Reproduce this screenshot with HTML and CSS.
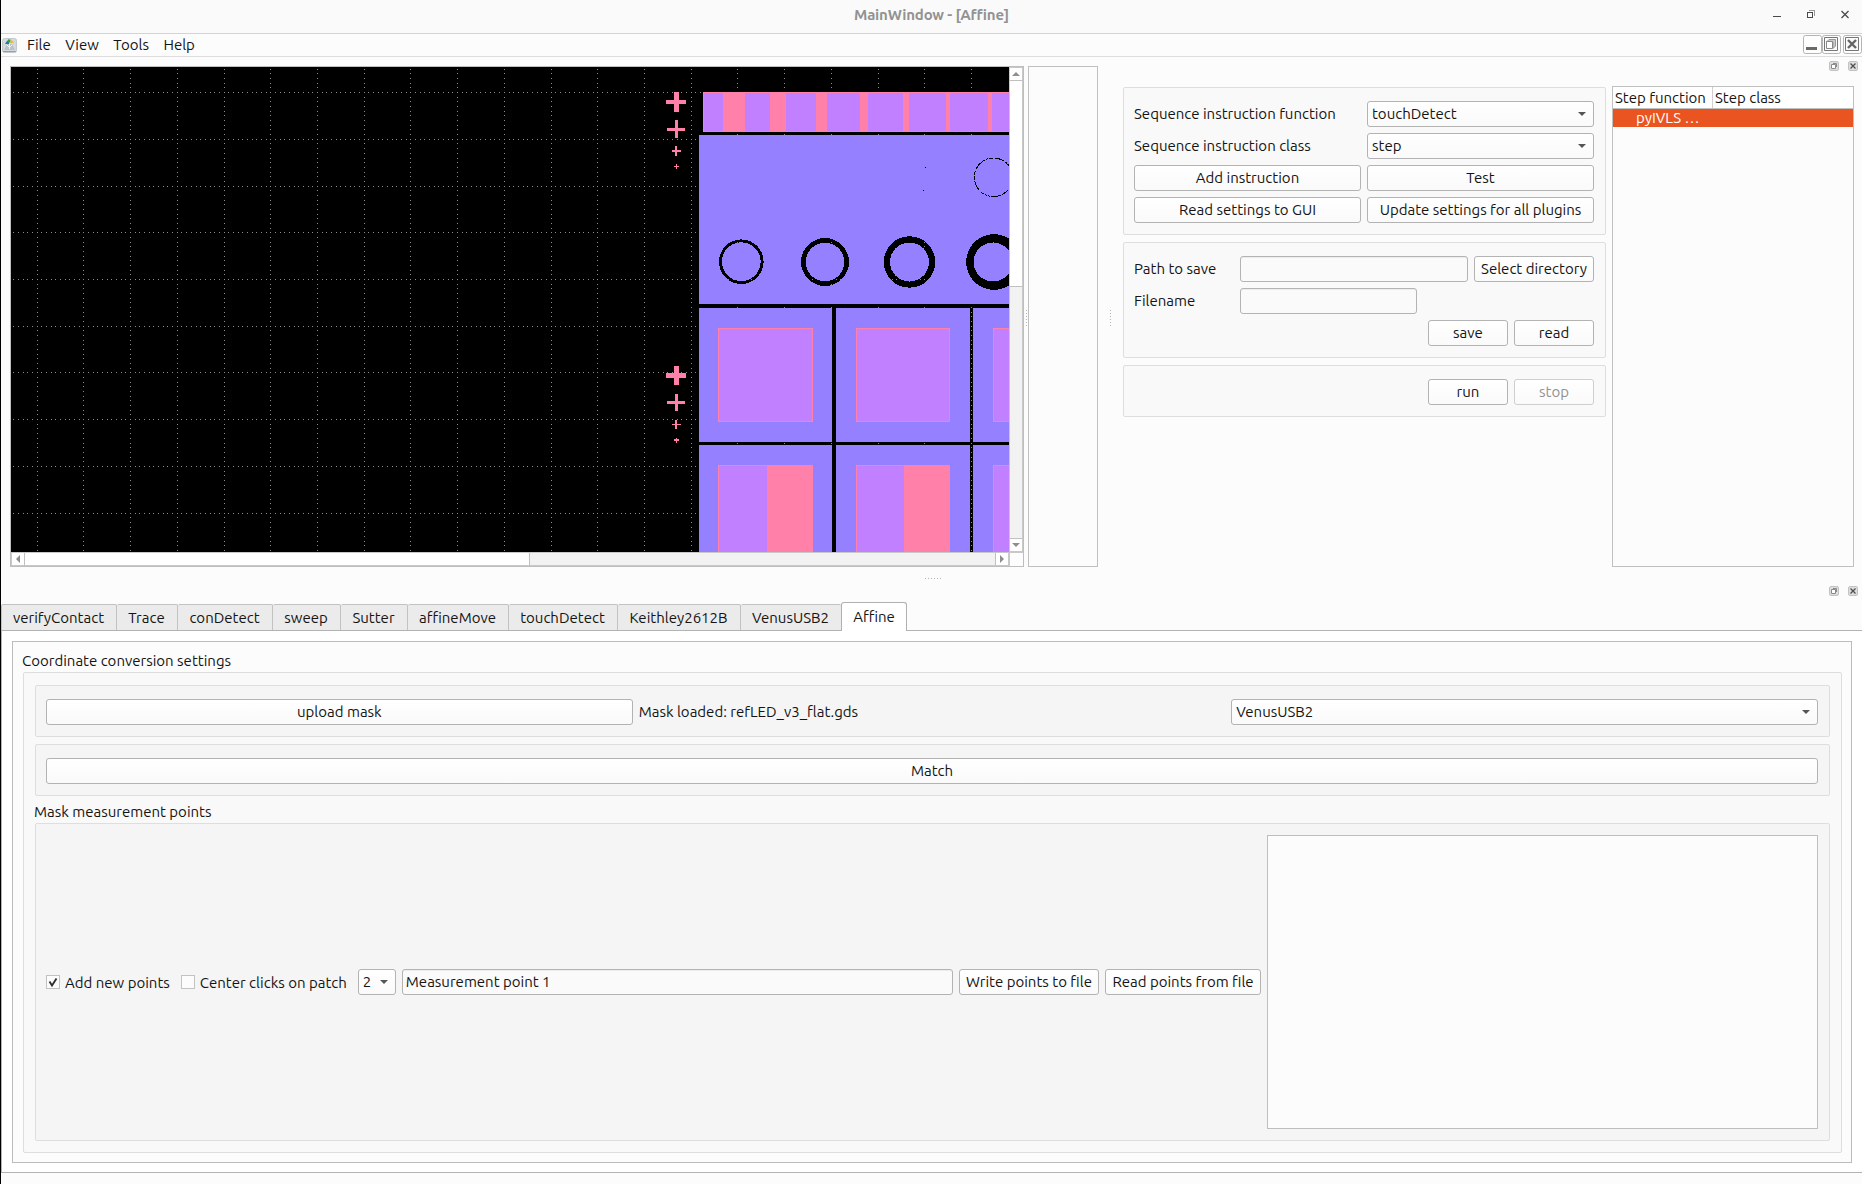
FILE: index.html
```
<!DOCTYPE html>
<html lang="en">
<head>
<meta charset="utf-8">
<title>MainWindow - [Affine]</title>
<link rel="stylesheet" href="styles.css">
</head>
<body>
<div class="window">
  <header class="titlebar">
    <span class="title">MainWindow - [Affine]</span>
    <div class="window-controls">
      <svg width="76" height="9" viewBox="0 0 76 9" shape-rendering="crispEdges">
        <rect x="0" y="6" width="8" height="1" fill="#4a4a4a"/>
        <path d="M34.5 2.5h5v5h-5z" fill="none" stroke="#4a4a4a"/>
        <path d="M36 .5h5.500v5.500" fill="none" stroke="#9a9a9a"/>
        <path d="M68.500 1l7 7M75.500 1l-7 7" stroke="#4a4a4a" stroke-width="1.300" shape-rendering="auto"/>
      </svg>
    </div>
  </header>

  <nav class="menubar">
    <svg class="app-icon" width="15" height="15" viewBox="0 0 15 15">
      <rect x=".5" y=".5" width="14" height="14" rx="2" fill="#d5d9db" stroke="#c3c8ca"/>
      <path d="M3 6Q5 2 7 1.500V6z" fill="#1c78b8"/>
      <path d="M6 4.500V1.500h2.500V4.500z" fill="#35a23c"/>
      <path d="M8.500 1.500Q11 2.500 12 5H8.500z" fill="#e5bf3c"/>
      <path d="M2 12l3-6h5l3 6z" fill="#b9c3c9"/>
      <path d="M5 7l2 2M10 7L8 9M7.500 6v5" stroke="#eef1f2"/>
      <path d="M1 13.500h13" stroke="#97a1a6"/>
    </svg>
    <span>File</span><span>View</span><span>Tools</span><span>Help</span>
    <div class="mdi-controls">
      <svg width="19" height="19" viewBox="0 0 19 19"><rect class="mdi-box" x=".5" y=".5" width="18" height="18" rx="2"/><path d="M3 12h11v3H3z" fill="#6b6b66"/></svg>
      <svg width="19" height="19" viewBox="0 0 19 19"><rect class="mdi-box" x=".5" y=".5" width="18" height="18" rx="2"/><path d="M2.500 2.500h13v13h-13z" fill="#fafafa" stroke="#777"/><path d="M7 4.500h6.500V11L11 13.500V7H4.500z" fill="#c9c9c9" stroke="#999"/><path d="M4.500 6.500h6v7h-6z" fill="#fff" stroke="#888"/></svg>
      <svg class="mdi-close" width="19" height="19" viewBox="0 0 19 19"><rect class="mdi-box" x=".5" y=".5" width="18" height="18" rx="2"/><path d="M2.500 2.500h13v13h-13z" fill="#fafafa" stroke="#777"/><path d="M5 5l8 8M13 5l-8 8" stroke="#666" stroke-width="2.400"/></svg>
    </div>
  </nav>

  <main class="upper">
    <div class="viewer">
      <svg class="mask" width="998" height="485" viewBox="11 67 998 485" shape-rendering="crispEdges">
        <rect x="11" y="67" width="998" height="485" fill="#000"/>
        <g id="grid" class="grid"></g>
        <path fill="#9580ff" fill-rule="evenodd" d="M699 135H1009V304H699z
          M719 261.700a22.300 22.300 0 1 0 44.600 0a22.300 22.300 0 1 0-44.600 0z M721.900 261.700a19.400 19.400 0 1 0 38.800 0a19.400 19.400 0 1 0-38.800 0z
          M801 262a24 24 0 1 0 48 0a24 24 0 1 0-48 0z M805.700 262a19.300 19.300 0 1 0 38.600 0a19.300 19.300 0 1 0-38.600 0z
          M883.800 262a25.700 25.700 0 1 0 51.400 0a25.700 25.700 0 1 0-51.400 0z M890 262a19.500 19.500 0 1 0 39 0a19.500 19.500 0 1 0-39 0z"/>
        <path d="M1009 238.600A27.800 27.800 0 1 0 1009 285.400V273.200A19.500 19.500 0 1 1 1009 250.800z" fill="#000"/>
        <circle cx="993.500" cy="177.300" r="19.300" fill="none" stroke="#000" stroke-dasharray="10 1 2 1 2 1 4 2"/>
        <path d="M925 167h1v1h-1zM923 190h1v1h-1z"/>
        <path class="blue" d="M699 308H832V442H699zM836 308H970V442H836zM973 308H1009V442H973zM699 445H832V552H699zM836 445H970V552H836zM973 445H1009V552H973z"/>
        <path class="pink" d="M703 92H1009V132H703zM718 328H813V422H718zM856 328H950V422H856zM993 328H1009V422H993zM718 465H813V552H718zM856 465H950V552H856zM993 465H1009V552H993z"/>
        <path class="violet" d="M704 93H723V131H704zM745 93H770V131H745zM786 93H816V131H786zM827 93H860V131H827zM868 93H903V131H868zM909 93H946V131H909zM950 93H988V131H950zM992 93H1009V131H992z
          M719 329H812V421H719zM857 329H949V421H857zM994 329H1009V421H994zM719 466H767V552H719zM857 466H904V552H857zM994 466H1009V552H994z"/>
        <path class="pink" d="M666 100H686V104H666zM674 92H679V112H674zM667 128H685V131H667zM675 120H678V138H675zM672 150H681V152H672zM675 146H677V156H675zM674 166H679V167H674zM676 164H677V169H676z
          M666 373H686V378H666zM674 366H679V385H674zM667 401H685V404H667zM675 394H678V411H675zM672 424H681V425H672zM675 420H677V429H675zM674 439H679V441H674zM676 438H677V443H676z"/>
      </svg>
      <div class="scroll vertical">
        <i class="step"><svg width="8" height="4" viewBox="0 0 8 4"><path d="M0 4L4 0l4 4z" fill="#8e8e8e"/></svg></i>
        <i class="handle"></i><i class="trough"></i>
        <i class="step"><svg width="8" height="4" viewBox="0 0 8 4"><path d="M0 0l4 4 4-4z" fill="#8e8e8e"/></svg></i>
      </div>
      <div class="scroll horizontal">
        <i class="step"><svg width="4" height="8" viewBox="0 0 4 8"><path d="M4 0L0 4l4 4z" fill="#8e8e8e"/></svg></i>
        <i class="handle"></i><i class="trough"></i>
        <i class="step"><svg width="4" height="8" viewBox="0 0 4 8"><path d="M0 0l4 4-4 4z" fill="#8e8e8e"/></svg></i>
      </div>
      <div class="corner"></div>
    </div>
    <div class="grip narrow"><i></i><i></i><i></i><i></i><i></i><i></i></div>
    <div class="side-view"></div>
    <div class="grip wide"><i></i><i></i><i></i><i></i><i></i><i></i></div>

    <section class="dock">
      <div class="dock-title">
        <svg width="10" height="10" viewBox="0 0 10 10"><rect class="dock-box" x=".5" y=".5" width="9" height="9" rx="1.500"/><path d="M4 2.500h3.500V6" fill="none" stroke="#8a8a8a"/><path d="M2.500 3.500h4v4h-4z" fill="#fff" stroke="#8a8a8a"/></svg>
        <svg width="10" height="10" viewBox="0 0 10 10"><rect class="dock-box" x=".5" y=".5" width="9" height="9" rx="1.500"/><path d="M2.500 2.500l5 5M7.500 2.500l-5 5" stroke="#505050" stroke-width="1.300"/></svg>
      </div>
      <div class="dock-body">
        <div class="sequence">
          <div class="group instruction">
            <label>Sequence instruction function</label>
            <div class="combo">touchDetect<svg class="caret" width="8" height="4" viewBox="0 0 8 4"><path d="M0 0h8L4 4z"/></svg></div>
            <label>Sequence instruction class</label>
            <div class="combo">step<svg class="caret" width="8" height="4" viewBox="0 0 8 4"><path d="M0 0h8L4 4z"/></svg></div>
            <button>Add instruction</button><button>Test</button>
            <button>Read settings to GUI</button><button>Update settings for all plugins</button>
          </div>
          <div class="group saving">
            <div class="row"><label class="field-label">Path to save</label><div class="input grow"></div><button class="select-dir">Select directory</button></div>
            <div class="row"><label class="field-label">Filename</label><div class="input filename"></div></div>
            <div class="row end"><button class="small">save</button><button class="small">read</button></div>
          </div>
          <div class="group running">
            <div class="row end"><button class="small">run</button><button class="small" disabled>stop</button></div>
          </div>
        </div>
        <div class="tree">
          <div class="tree-head"><span class="first">Step function</span><span>Step class</span></div>
          <div class="tree-row">pyIVLS …</div>
        </div>
      </div>
    </section>
  </main>

  <div class="hgrip"><i></i><i></i><i></i><i></i><i></i><i></i></div>

  <section class="lower">
    <div class="dock-title">
      <svg width="10" height="10" viewBox="0 0 10 10"><rect class="dock-box" x=".5" y=".5" width="9" height="9" rx="1.500"/><path d="M4 2.500h3.500V6" fill="none" stroke="#8a8a8a"/><path d="M2.500 3.500h4v4h-4z" fill="#fff" stroke="#8a8a8a"/></svg>
      <svg width="10" height="10" viewBox="0 0 10 10"><rect class="dock-box" x=".5" y=".5" width="9" height="9" rx="1.500"/><path d="M2.500 2.500l5 5M7.500 2.500l-5 5" stroke="#505050" stroke-width="1.300"/></svg>
    </div>
    <div class="tabs">
      <span class="tab w115">verifyContact</span><span class="tab w61">Trace</span><span class="tab w95">conDetect</span><span class="tab w68">sweep</span><span class="tab w67">Sutter</span><span class="tab w101">affineMove</span><span class="tab w109">touchDetect</span><span class="tab w123">Keithley2612B</span><span class="tab w100">VenusUSB2</span><span class="tab active">Affine</span>
    </div>
    <div class="pane">
      <div class="page">
        <div class="caption">Coordinate conversion settings</div>
        <div class="group outer">
          <div class="group inner thirds">
            <button>upload mask</button>
            <label>Mask loaded: refLED_v3_flat.gds</label>
            <div class="combo">VenusUSB2<svg class="caret" width="8" height="4" viewBox="0 0 8 4"><path d="M0 0h8L4 4z"/></svg></div>
          </div>
          <div class="group inner match"><button>Match</button></div>
          <div class="caption points-caption">Mask measurement points</div>
          <div class="group inner points">
            <span class="check"><svg width="14" height="14" viewBox="0 0 14 14"><rect class="check-box" x=".5" y=".5" width="13" height="13"/><path d="M3.500 6.500l2.500 4L10.500 3.500" fill="none" stroke="#303030" stroke-width="1.900"/></svg>Add new points</span>
            <span class="check second"><svg width="14" height="14" viewBox="0 0 14 14"><rect class="check-box" x=".5" y=".5" width="13" height="13"/></svg>Center clicks on patch</span>
            <div class="combo tiny">2<svg class="caret" width="8" height="4" viewBox="0 0 8 4"><path d="M0 0h8L4 4z"/></svg></div>
            <div class="input grow">Measurement point 1</div>
            <button class="write">Write points to file</button>
            <button class="read">Read points from file</button>
            <div class="list"></div>
          </div>
        </div>
      </div>
    </div>
  </section>
</div>
<script src="grid.js"></script>
</body>
</html>
```
FILE: grid.js
```
// Dotted background grid of the mask viewer: one dot every 4.67px, a line every 46.7px.
const layer = document.getElementById('grid');
let d = '';
for (let k = 0; k < 21; k++) {
  const x = Math.round(36.68 + 46.715 * k);
  for (let n = -5; n < 99; n++) d += `M${x} ${Math.round(92.1 + 4.672 * n)}h1v1h-1z`;
}
for (let k = 0; k < 10; k++) {
  const y = Math.round(92.1 + 46.72 * k);
  for (let n = -5; n < 209; n++) d += `M${Math.round(36.68 + 4.6715 * n)} ${y}h1v1h-1z`;
}
const dots = document.createElementNS('http://www.w3.org/2000/svg', 'path');
dots.setAttribute('d', d);
layer.appendChild(dots);
```
FILE: styles.css
```
* { box-sizing: border-box; }

body {
  margin: 0;
  background: #fcfcfc;
  color: #141414;
  font: 15px/17px Ubuntu, "Noto Sans", sans-serif;
}

svg { display: block; flex: none; }

.window {
  display: flex;
  flex-direction: column;
  height: 1184px;
  border-left: 1px solid #000;
  overflow: hidden;
  white-space: nowrap;
}

/* title bar and menu */
.titlebar {
  display: flex;
  align-items: center;
  justify-content: center;
  flex: none;
  height: 34px;
  padding: 0 13px 4px 89px;
  background: #fafafa;
  border-bottom: 1px solid #d4d4d4;
}
.title { flex: 1; text-align: center; font-weight: bold; letter-spacing: -0.18px; color: #929292; }
.window-controls { display: flex; }
.menubar {
  display: flex;
  align-items: center;
  flex: none;
  gap: 14.500px;
  height: 23px;
  padding-left: 1px;
  border-bottom: 1px solid #dedede;
}
.menubar span { padding-bottom: 2px; }
.app-icon { margin-right: -4.500px; }
.mdi-controls { display: flex; height: 21px; margin-left: auto; }
.mdi-close { margin-left: 2px; }
.mdi-box { fill: #fdfdfd; stroke: #b4b4b4; }

/* upper half */
.upper { display: flex; flex: none; height: 510px; padding-left: 9px; }
.viewer {
  display: grid;
  flex: none;
  grid-template: 485px 14px / 998px 14px;
  height: 501px;
  margin-top: 9px;
  border: 1px solid #bebebe;
}
.grid { fill: #8c8c8c; }
.blue { fill: #9580ff; }
.pink { fill: #ff80a8; }
.violet { fill: #c080ff; }

.scroll { display: flex; border: 1px solid #c8c8c8; background: #f2f2f2; }
.vertical { flex-direction: column; }
.step { display: flex; flex: none; align-items: center; justify-content: center; background: #fff; }
.vertical .step { height: 12px; }
.vertical .handle { height: 207px; border: solid #c0c0c0; border-width: 1px 0; background: #fff; }
.trough { flex: 1; }
.vertical .trough { border-bottom: 1px solid #c0c0c0; }
.horizontal .step { width: 12px; }
.horizontal .handle { width: 506px; border: solid #c0c0c0; border-width: 0 1px; background: #fff; }
.horizontal .trough { border-right: 1px solid #c0c0c0; }
.corner { border: solid #c8c8c8; border-width: 1px 0 0 1px; background: #fdfdfd; }

.grip { display: flex; flex: none; flex-direction: column; gap: 2px; padding-top: 253px; }
.grip i, .hgrip i { width: 1px; height: 1px; background: #b4b4b4; }
.narrow { width: 4px; padding-left: 2px; }
.wide { width: 14px; padding-left: 12px; }
.side-view { flex: none; width: 70px; height: 501px; margin-top: 9px; border: 1px solid #c0c0c0; }

.dock { display: flex; flex: 1; flex-direction: column; }
.dock-title { display: flex; flex: none; justify-content: flex-end; gap: 9px; height: 29px; padding: 4px 4px 0 0; }
.dock-box { fill: #dedede; stroke: #c2c2c2; }
.dock-body { display: flex; flex: 1; gap: 6px; padding-left: 11px; }
.sequence { display: flex; flex: none; flex-direction: column; gap: 7px; width: 483px; padding-top: 1px; }

.group { border: 1px solid #dedede; border-radius: 2px; background: #f9f9f9; }
.instruction {
  display: grid;
  grid-template-columns: 227px 227px;
  gap: 6px;
  height: 148px;
  padding: 13px 0 0 10px;
  grid-auto-rows: 26px;
  align-items: center;
}
.saving { display: flex; flex-direction: column; gap: 6px; height: 116px; padding: 13px 11px 0 10px; }
.running { height: 52px; padding: 13px 11px 0 10px; }
.row { display: flex; align-items: center; gap: 6px; }
.end { justify-content: flex-end; }
label { padding-bottom: 1px; }
.field-label { width: 100px; }
.grow { flex: 1; }
.filename { width: 177px; }
.small { width: 80px; }
.select-dir { width: 120px; }

button, .combo, .input {
  height: 26px;
  padding: 0;
  border: 1px solid #b3b3b3;
  border-radius: 3px;
  background: linear-gradient(#fff, #fafafa);
  color: #141414;
  font: inherit;
  line-height: 24px;
}
button:disabled { border-color: #cfcfcf; color: #929292; }
.combo { display: flex; align-items: center; justify-content: space-between; padding: 0 7px 0 4px; }
.caret { fill: #555; }
.input { padding-left: 3px; background: #fafafa; box-shadow: inset 0 1px #ececec; }

.tree { flex: none; width: 242px; height: 481px; border: 1px solid #c0c0c0; }
.tree-head { display: flex; height: 22px; border-bottom: 1px solid #c0c0c0; background: #fff; line-height: 22px; }
.tree-head span { padding-left: 2px; }
.tree-head .first { width: 100px; border-right: 1px solid #d0d0d0; }
.tree-row { height: 18px; padding-left: 23px; background: #e95420; color: #fff; line-height: 18px; }

.hgrip { display: flex; flex: none; justify-content: center; gap: 2px; height: 15px; padding: 11px 0 0 2px; }

/* lower half */
.lower { display: flex; flex: 1; flex-direction: column; }
.lower .dock-title { height: 20px; }
.tabs { display: flex; flex: none; align-items: flex-end; height: 28px; }
.tab {
  height: 26px;
  padding-right: 1px;
  border: solid #c2c2c2;
  border-width: 1px 1px 0 0;
  border-radius: 2px 2px 0 0;
  background: #ebebeb;
  line-height: 26px;
  text-align: center;
}
.tab:first-child { border-left-width: 1px; }
.w115 { width: 116px; }
.w61 { width: 61px; }
.w95 { width: 95px; }
.w68 { width: 68px; }
.w67 { width: 67px; }
.w101 { width: 101px; }
.w109 { width: 109px; }
.w123 { width: 123px; }
.w100 { width: 100px; border-right: 0; }
.tab.active {
  z-index: 1;
  width: 66px;
  height: 29px;
  margin-bottom: -1px;
  padding-right: 0;
  border: solid #b0b0b0;
  border-width: 1px 1px 0;
  border-radius: 3px 3px 0 0;
  background: #fff;
  line-height: 28px;
}
.pane {
  flex: none;
  height: 543px;
  padding: 10px 10px 9px;
  border: solid #b3b3b3;
  border-width: 1px 0 1px 1px;
  background: #fff;
}
.page { display: flex; flex-direction: column; height: 522px; padding: 10px 9px 9px 10px; border: 1px solid #bcbcbc; background: #fcfcfc; }
.caption { height: 20px; margin-left: -1px; }
.outer { display: flex; flex: 1; flex-direction: column; padding: 12px 11px 11px; }
.inner { background: #f5f5f5; }
.thirds, .match { display: grid; align-items: center; height: 52px; margin-bottom: 7px; padding: 2px 11px 0 10px; }
.thirds { grid-template-columns: repeat(3, 1fr); gap: 6px; }
.thirds label { padding-bottom: 2px; }
.points-caption { height: 20px; }
.points { display: flex; flex: 1; align-items: center; gap: 6px; padding: 11px 11px 11px 10px; }
.check { display: flex; gap: 5px; align-items: center; }
.second { margin: 0 5px; }
.check-box { fill: #fcfcfc; stroke: #c2c2c2; }
.tiny { width: 38px; }
.write { width: 140px; }
.read { width: 156px; }
.list { align-self: stretch; width: 551px; border: 1px solid #bebebe; background: #fcfcfc; }
```
